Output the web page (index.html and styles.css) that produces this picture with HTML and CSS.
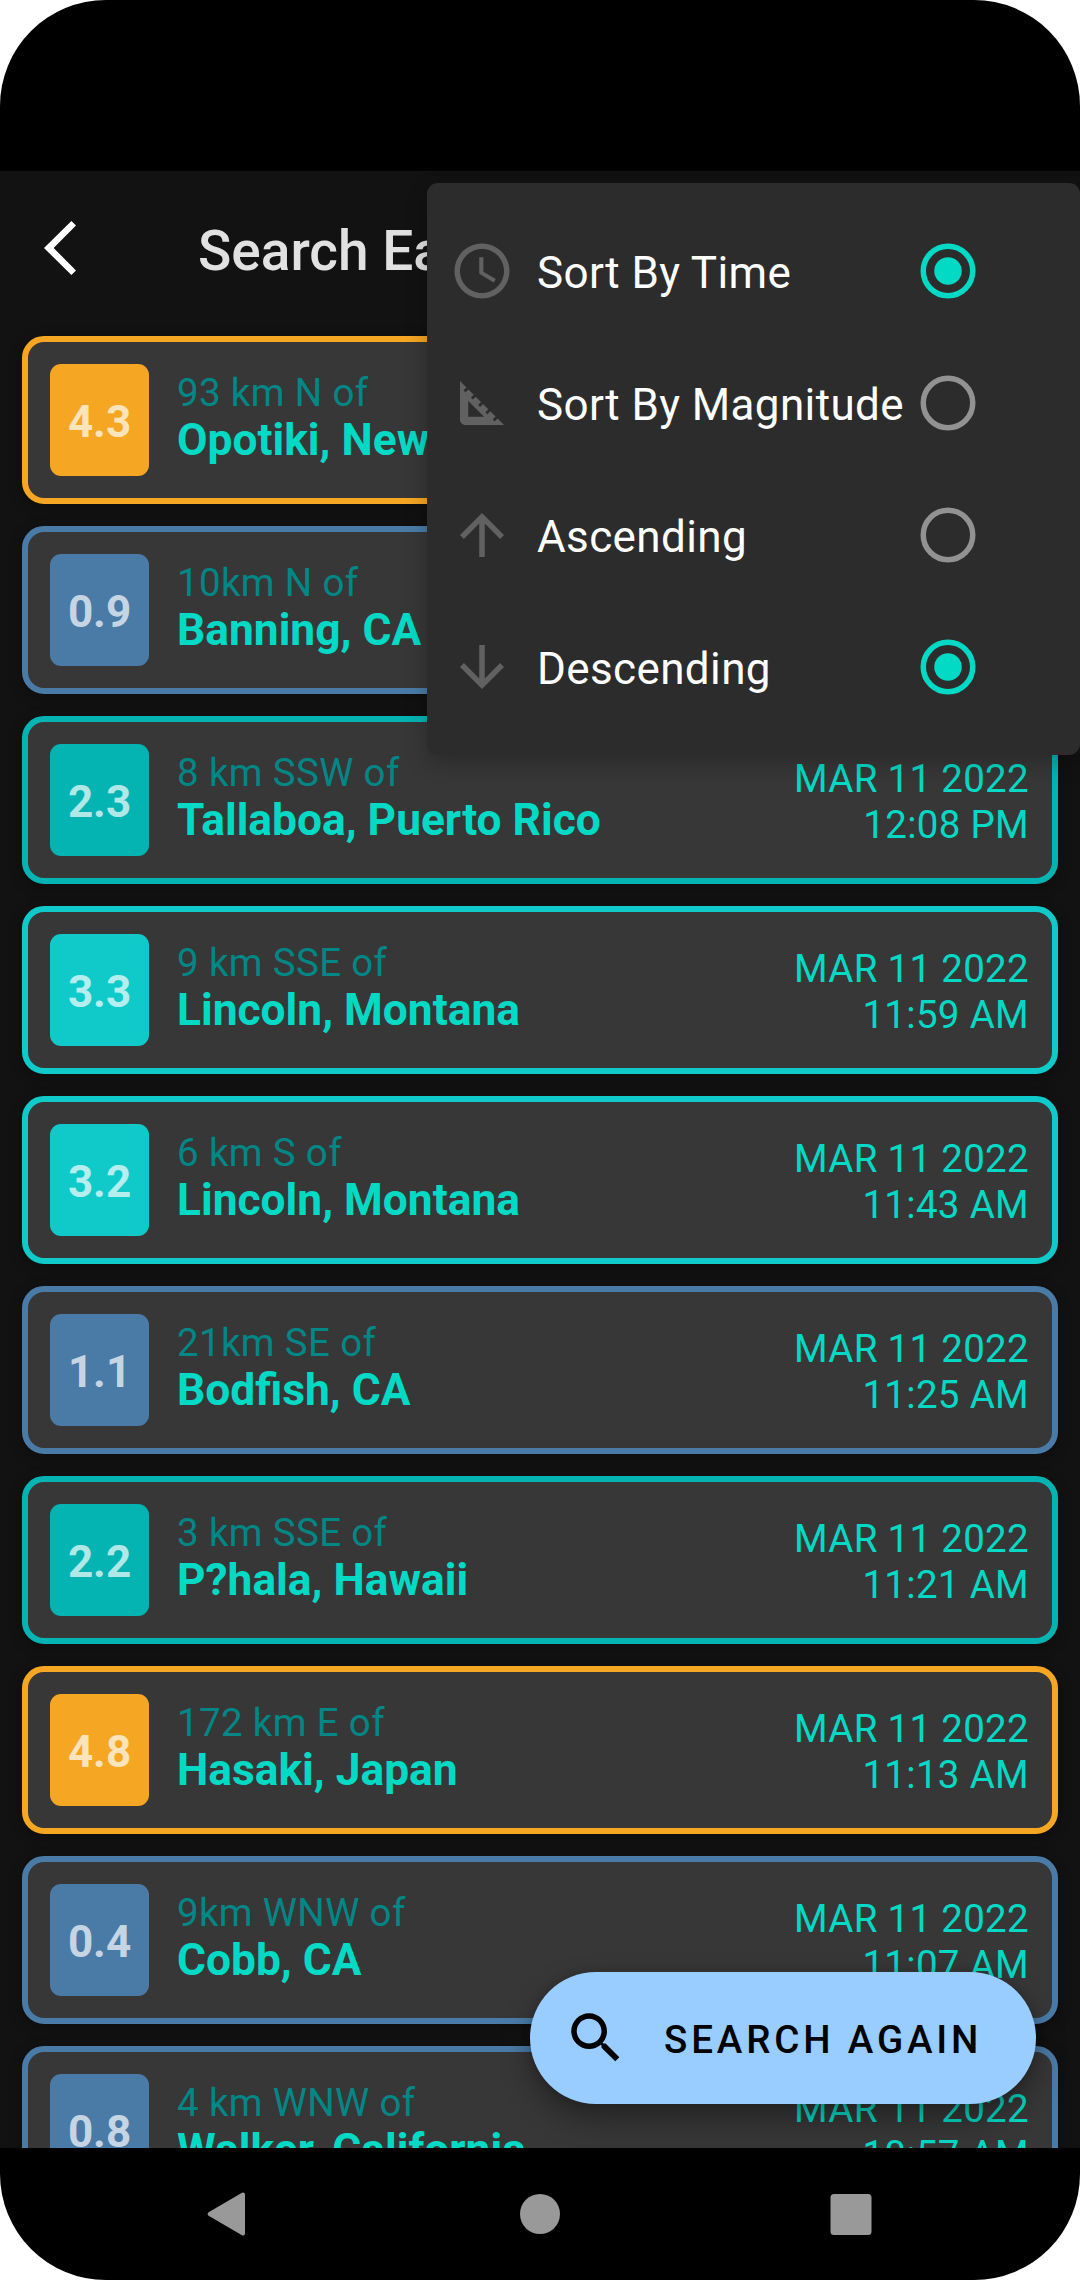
FILE: index.html
```html
<!DOCTYPE html>
<html lang="en">
<head>
<meta charset="utf-8">
<title>Search Earthquakes</title>
<link rel="stylesheet" href="styles.css">
</head>
<body>
<div class="device">
  <div class="status-bar"></div>
  <main class="app">
    <header class="toolbar">
      <svg class="back" viewBox="0 0 32 54"><path d="M27.4 0 L32 4.6 L9.6 27 L32 49.4 L27.4 54 L0 27 Z"/></svg>
      <h1 class="toolbar-title">Search Earthquakes</h1>
    </header>
    <ul class="quakes">
      <li class="quake mag4"><div class="badge">4.3</div><div class="place"><span class="distance">93 km N of</span><span class="name">Opotiki, New Zealand</span></div></li>
      <li class="quake mag0"><div class="badge">0.9</div><div class="place"><span class="distance">10km N of</span><span class="name">Banning, CA</span></div></li>
      <li class="quake mag2"><div class="badge">2.3</div><div class="place"><span class="distance">8 km SSW of</span><span class="name">Tallaboa, Puerto Rico</span></div><div class="when"><span>MAR 11 2022</span><span>12:08 PM</span></div></li>
      <li class="quake mag3"><div class="badge">3.3</div><div class="place"><span class="distance">9 km SSE of</span><span class="name">Lincoln, Montana</span></div><div class="when"><span>MAR 11 2022</span><span>11:59 AM</span></div></li>
      <li class="quake mag3"><div class="badge">3.2</div><div class="place"><span class="distance">6 km S of</span><span class="name">Lincoln, Montana</span></div><div class="when"><span>MAR 11 2022</span><span>11:43 AM</span></div></li>
      <li class="quake mag0"><div class="badge">1.1</div><div class="place"><span class="distance">21km SE of</span><span class="name">Bodfish, CA</span></div><div class="when"><span>MAR 11 2022</span><span>11:25 AM</span></div></li>
      <li class="quake mag2"><div class="badge">2.2</div><div class="place"><span class="distance">3 km SSE of</span><span class="name">P?hala, Hawaii</span></div><div class="when"><span>MAR 11 2022</span><span>11:21 AM</span></div></li>
      <li class="quake mag4"><div class="badge">4.8</div><div class="place"><span class="distance">172 km E of</span><span class="name">Hasaki, Japan</span></div><div class="when"><span>MAR 11 2022</span><span>11:13 AM</span></div></li>
      <li class="quake mag0"><div class="badge">0.4</div><div class="place"><span class="distance">9km WNW of</span><span class="name">Cobb, CA</span></div><div class="when"><span>MAR 11 2022</span><span>11:07 AM</span></div></li>
      <li class="quake mag0"><div class="badge">0.8</div><div class="place"><span class="distance">4 km WNW of</span><span class="name">Walker, California</span></div><div class="when"><span>MAR 11 2022</span><span>10:57 AM</span></div></li>
    </ul>
    <button class="fab">
      <svg class="fab-icon" viewBox="0 0 24 24"><path d="M15.5 14h-.79l-.28-.27C15.41 12.59 16 11.11 16 9.5 16 5.91 13.09 3 9.5 3S3 5.91 3 9.5 5.91 16 9.5 16c1.61 0 3.09-.59 4.23-1.57l.27.28v.79l5 4.99L20.49 19l-4.99-5zm-6 0C7.01 14 5 11.99 5 9.5S7.01 5 9.5 5 14 7.01 14 9.5 11.99 14 9.5 14z"/></svg>
      <span class="fab-label">SEARCH AGAIN</span>
    </button>
  </main>
  <nav class="nav-bar">
    <svg class="nav-icon" viewBox="0 0 48 48"><path d="M40 4.4v39.2a2 2 0 0 1-3 1.7L3.6 25.7a2 2 0 0 1 0-3.4L37 2.700a2 2 0 0 1 3 1.700z"/></svg>
    <svg class="nav-icon" viewBox="0 0 48 48"><circle cx="24" cy="24" r="20"/></svg>
    <svg class="nav-icon" viewBox="0 0 48 48"><rect x="3.5" y="4" width="41" height="41" rx="3.5"/></svg>
  </nav>
  <div class="menu">
    <div class="menu-item">
      <svg class="menu-icon" viewBox="0 0 24 24"><path d="M11.990 2C6.470 2 2 6.480 2 12s4.470 10 9.990 10C17.520 22 22 17.520 22 12S17.520 2 11.990 2zM12 20c-4.420 0-8-3.580-8-8s3.580-8 8-8 8 3.580 8 8-3.580 8-8 8z"/><path d="M12.500 7H11v6l5.250 3.150.75-1.230-4.500-2.670z"/></svg>
      <span class="menu-label">Sort By Time</span>
      <svg class="radio checked" viewBox="0 0 24 24"><circle class="ring" cx="12" cy="12" r="9"/><circle class="dot" cx="12" cy="12" r="5"/></svg>
    </div>
    <div class="menu-item">
      <svg class="menu-icon" viewBox="0 0 24 24"><path d="M17.660 17.660l-1.060 1.060-.71-.71 1.060-1.060-1.940-1.940-1.060 1.060-.71-.71 1.060-1.060-1.940-1.940-1.060 1.060-.71-.71 1.060-1.060L9.700 9.700l-1.060 1.060-.71-.71 1.060-1.060-1.940-1.940-1.060 1.060-.71-.71 1.060-1.060L4 4v14c0 1.100.9 2 2 2h14l-2.340-2.340zM7 17v-5.760L12.760 17H7z"/></svg>
      <span class="menu-label">Sort By Magnitude</span>
      <svg class="radio" viewBox="0 0 24 24"><circle class="ring" cx="12" cy="12" r="9"/></svg>
    </div>
    <div class="menu-item">
      <svg class="menu-icon" viewBox="0 0 24 24"><path d="M4 12l1.410 1.410L11 7.830V20h2V7.830l5.580 5.590L20 12l-8-8-8 8z"/></svg>
      <span class="menu-label">Ascending</span>
      <svg class="radio" viewBox="0 0 24 24"><circle class="ring" cx="12" cy="12" r="9"/></svg>
    </div>
    <div class="menu-item">
      <svg class="menu-icon" viewBox="0 0 24 24"><path d="M20 12l-1.410-1.410L13 16.170V4h-2v12.170l-5.580-5.590L4 12l8 8 8-8z"/></svg>
      <span class="menu-label">Descending</span>
      <svg class="radio checked" viewBox="0 0 24 24"><circle class="ring" cx="12" cy="12" r="9"/><circle class="dot" cx="12" cy="12" r="5"/></svg>
    </div>
  </div>
</div>
</body>
</html>
```
FILE: styles.css
```css
* { box-sizing: border-box; }

body {
  margin: 0;
  background: #fff;
  font-family: Roboto, "Noto Sans", sans-serif;
}

.device {
  position: relative;
  display: flex;
  flex-direction: column;
  width: 1080px;
  height: 2280px;
  overflow: hidden;
  border-radius: 106px;
  background: #000;
}

.status-bar { flex: none; height: 171px; }

.app {
  position: relative;
  flex: 1;
  min-height: 0;
  overflow: hidden;
  background: #121212;
}

.toolbar {
  display: flex;
  align-items: center;
  gap: 122px;
  height: 165px;
  padding: 0 0 11px 44px;
}

.back { width: 32px; height: 54px; fill: #fff; }

.toolbar-title {
  margin: 6px 0 0;
  font-size: 55px;
  font-weight: 500;
  line-height: 64px;
  color: #e1e1e1;
  white-space: nowrap;
}

.quakes {
  display: flex;
  flex-direction: column;
  gap: 22px;
  margin: 0;
  padding: 0 22px;
  list-style: none;
}

.quake {
  display: flex;
  flex: none;
  height: 168px;
  padding: 22px 23px 22px 22px;
  border: 6px solid var(--mag);
  border-radius: 22px;
  background: #373737;
  box-shadow: 0 3px 14px rgba(0, 0, 0, .3);
  white-space: nowrap;
}

.mag0 { --mag: #4a7ba7; }
.mag2 { --mag: #04b4b3; }
.mag3 { --mag: #10cac9; }
.mag4 { --mag: #f5a623; }

.badge {
  flex: none;
  width: 99px;
  height: 112px;
  padding-top: 2px;
  border-radius: 11px;
  background: var(--mag);
  color: rgba(255, 255, 255, .7);
  font-size: 44px;
  font-weight: 700;
  line-height: 112px;
  text-align: center;
}

.place {
  display: flex;
  flex: 1;
  flex-direction: column;
  padding: 6px 0 0 28px;
}

.distance {
  color: #018786;
  font-size: 38.5px;
  letter-spacing: .35px;
  line-height: 45px;
}

.name {
  color: #03dac5;
  font-size: 44.3px;
  font-weight: 700;
  line-height: 50px;
}

.when {
  display: flex;
  flex-direction: column;
  padding-top: 12px;
  color: #03dac5;
  font-size: 38.5px;
  letter-spacing: .3px;
  line-height: 46px;
  text-align: right;
}

.fab {
  position: absolute;
  right: 44px;
  bottom: 44px;
  display: flex;
  align-items: center;
  gap: 35px;
  width: 506px;
  height: 132px;
  padding: 0 0 0 33px;
  border: 0;
  border-radius: 66px;
  background: #99ccff;
  box-shadow: 0 14px 30px rgba(0, 0, 0, .36), 0 0 8px rgba(0, 0, 0, .15);
  color: #000;
  font-family: inherit;
}

.fab-icon { width: 66px; height: 66px; }

.fab-label {
  padding-top: 4px;
  font-size: 38.5px;
  font-weight: 500;
  letter-spacing: 3.85px;
  line-height: 46px;
  white-space: nowrap;
}

.nav-bar {
  display: flex;
  flex: none;
  justify-content: space-between;
  align-items: center;
  height: 132px;
  padding: 0 205px;
}

.nav-icon { width: 48px; height: 48px; fill: #999; }

.menu {
  position: absolute;
  top: 183px;
  right: 0;
  width: 653px;
  padding: 22px 0;
  border-radius: 11px;
  background: #2c2c2c;
  box-shadow: 0 8px 22px rgba(0, 0, 0, .24);
}

.menu-item {
  display: flex;
  align-items: center;
  height: 132px;
  padding: 0 99px 0 22px;
}

.menu-icon { flex: none; width: 66px; height: 66px; fill: #616161; }

.menu-label {
  flex: 1;
  min-width: 0;
  padding: 4px 0 0 22px;
  color: #fff;
  font-size: 44px;
  letter-spacing: .38px;
  line-height: 52px;
  white-space: nowrap;
}

.radio { flex: none; width: 66px; height: 66px; color: #929292; }

.ring { fill: none; stroke: currentColor; stroke-width: 2; }

.dot { fill: currentColor; }

.checked { color: #03dac5; }
```
